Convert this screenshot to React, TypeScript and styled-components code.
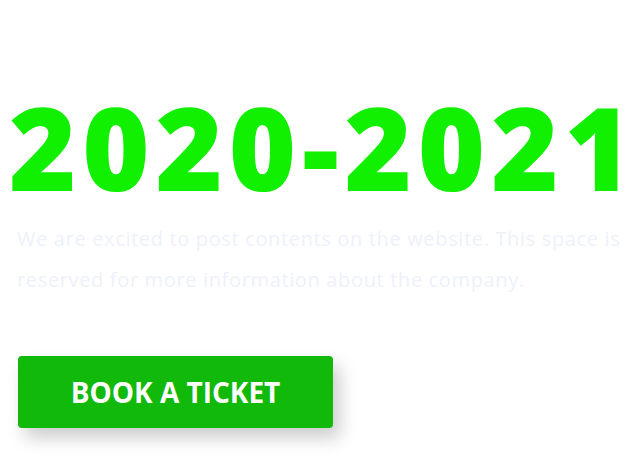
import React from "react";
import styled, { createGlobalStyle } from "styled-components";

const Global = createGlobalStyle`
  html, body { margin: 0; padding: 0; background: #ffffff; }
  body { font-family: "Open Sans", "Liberation Sans", sans-serif; }
`;

const Page = styled.main`
  width: 629px;
  height: 462px;
  box-sizing: border-box;
  padding-top: 89px;
  display: flex;
  flex-direction: column;
  align-items: flex-start;
  overflow: hidden;
`;

const Title = styled.h1`
  margin: 0 0 0 9px;
  font-family: "Open Sans", sans-serif;
  font-weight: 800;
  font-size: 115px;
  line-height: 115px;
  letter-spacing: 5.9px;
  color: #11f000;
  white-space: nowrap;
`;

const LastChar = styled.span`
  letter-spacing: 0;
`;

const Text = styled.p`
  margin: 14px 0 0 17px;
  width: 612px;
  font-family: "Open Sans", sans-serif;
  font-size: 20px;
  line-height: 41px;
  letter-spacing: 0.65px;
  color: #eef1fb;
`;

const Button = styled.button`
  margin: 56px 0 0 18px;
  width: 315px;
  height: 72px;
  padding: 0;
  border: none;
  border-radius: 4px;
  background: #10b90a;
  color: #ffffff;
  font-family: "Open Sans", sans-serif;
  font-weight: 700;
  font-size: 28px;
  box-shadow: 7px 10px 18px rgba(0, 0, 0, 0.2);
  cursor: pointer;
`;

export default function App() {
  return (
    <>
      <Global />
      <Page>
        <Title>
          2020-202<LastChar>1</LastChar>
        </Title>
        <Text>
          We are excited to post contents on the website. This space is reserved for more information about the company.
        </Text>
        <Button>BOOK A TICKET</Button>
      </Page>
    </>
  );
}
